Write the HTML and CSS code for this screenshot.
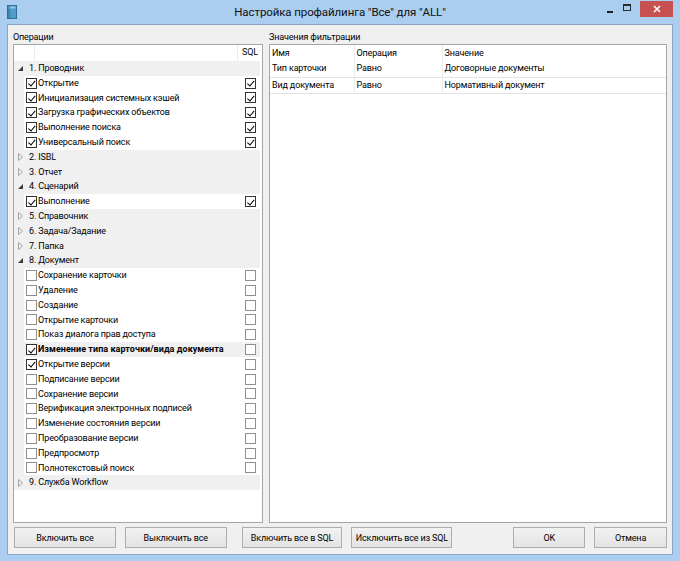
FILE: index.html
```html
<!DOCTYPE html>
<html lang="ru">
<head>
<meta charset="utf-8">
<title>Настройка профайлинга</title>
<link rel="stylesheet" href="styles.css">
</head>
<body>
<div class="window">
  <div class="titlebar">
    <div class="tb-left">
      <svg class="app-icon" width="10" height="14" viewBox="0 0 10 14">
        <rect x="0.5" y="0.5" width="9" height="13" fill="#4f9cc9" stroke="#2d6f96"/>
        <rect x="1.5" y="1.5" width="7" height="2" fill="#8cc6e6"/>
        <line x1="2" y1="1" x2="2" y2="13" stroke="#2d6f96"/>
      </svg>
    </div>
    <div class="title">Настройка профайлинга "Все" для "ALL"</div>
    <div class="tb-right">
      <span class="ctl ctl-min"><span class="min-bar"></span></span>
      <span class="ctl ctl-max"><span class="max-box"></span></span>
      <span class="ctl ctl-close">
        <svg width="8" height="8" viewBox="0 0 8 8"><path d="M1 1 L7 7 M7 1 L1 7" stroke="#fff" stroke-width="1.6"/></svg>
      </span>
    </div>
  </div>

  <div class="client">
    <div class="panes">
      <section class="pane">
        <div class="pane-label">Операции</div>
        <div class="box tree">
          <div class="tree-head">
            <span class="th-ind"></span>
            <span class="th-name"></span>
            <span class="th-sql">SQL</span>
          </div>

          <div class="row group"><span class="arrow arrow-exp"></span><span class="gtext">1. Проводник</span></div>
          <div class="row item"><div class="cell"><span class="cb on"></span><span class="itext">Открытие</span><span class="cb on sql"></span></div></div>
          <div class="row item"><div class="cell"><span class="cb on"></span><span class="itext">Инициализация системных кэшей</span><span class="cb on sql"></span></div></div>
          <div class="row item"><div class="cell"><span class="cb on"></span><span class="itext">Загрузка графических объектов</span><span class="cb on sql"></span></div></div>
          <div class="row item"><div class="cell"><span class="cb on"></span><span class="itext">Выполнение поиска</span><span class="cb on sql"></span></div></div>
          <div class="row item"><div class="cell"><span class="cb on"></span><span class="itext">Универсальный поиск</span><span class="cb on sql"></span></div></div>

          <div class="row group"><svg class="arrow-col" width="5" height="8" viewBox="0 0 5 8"><path d="M0.5 0.5 L4.5 4 L0.5 7.5 Z" fill="none" stroke="#a6a6a6"/></svg><span class="gtext">2. ISBL</span></div>
          <div class="row group"><svg class="arrow-col" width="5" height="8" viewBox="0 0 5 8"><path d="M0.5 0.5 L4.5 4 L0.5 7.5 Z" fill="none" stroke="#a6a6a6"/></svg><span class="gtext">3. Отчет</span></div>
          <div class="row group"><span class="arrow arrow-exp"></span><span class="gtext">4. Сценарий</span></div>
          <div class="row item"><div class="cell"><span class="cb on"></span><span class="itext">Выполнение</span><span class="cb on sql"></span></div></div>
          <div class="row group"><svg class="arrow-col" width="5" height="8" viewBox="0 0 5 8"><path d="M0.5 0.5 L4.5 4 L0.5 7.5 Z" fill="none" stroke="#a6a6a6"/></svg><span class="gtext">5. Справочник</span></div>
          <div class="row group"><svg class="arrow-col" width="5" height="8" viewBox="0 0 5 8"><path d="M0.5 0.5 L4.5 4 L0.5 7.5 Z" fill="none" stroke="#a6a6a6"/></svg><span class="gtext">6. Задача/Задание</span></div>
          <div class="row group"><svg class="arrow-col" width="5" height="8" viewBox="0 0 5 8"><path d="M0.5 0.5 L4.5 4 L0.5 7.5 Z" fill="none" stroke="#a6a6a6"/></svg><span class="gtext">7. Папка</span></div>
          <div class="row group"><span class="arrow arrow-exp"></span><span class="gtext">8. Документ</span></div>
          <div class="row item"><div class="cell"><span class="cb"></span><span class="itext">Сохранение карточки</span><span class="cb sql"></span></div></div>
          <div class="row item"><div class="cell"><span class="cb"></span><span class="itext">Удаление</span><span class="cb sql"></span></div></div>
          <div class="row item"><div class="cell"><span class="cb"></span><span class="itext">Создание</span><span class="cb sql"></span></div></div>
          <div class="row item"><div class="cell"><span class="cb"></span><span class="itext">Открытие карточки</span><span class="cb sql"></span></div></div>
          <div class="row item"><div class="cell"><span class="cb"></span><span class="itext">Показ диалога прав доступа</span><span class="cb sql"></span></div></div>
          <div class="row item"><div class="cell cell-sel"><span class="cb on"></span><span class="itext bold">Изменение типа карточки/вида документа</span><span class="cb sql"></span></div></div>
          <div class="row item"><div class="cell"><span class="cb on"></span><span class="itext">Открытие версии</span><span class="cb sql"></span></div></div>
          <div class="row item"><div class="cell"><span class="cb"></span><span class="itext">Подписание версии</span><span class="cb sql"></span></div></div>
          <div class="row item"><div class="cell"><span class="cb"></span><span class="itext">Сохранение версии</span><span class="cb sql"></span></div></div>
          <div class="row item"><div class="cell"><span class="cb"></span><span class="itext">Верификация электронных подписей</span><span class="cb sql"></span></div></div>
          <div class="row item"><div class="cell"><span class="cb"></span><span class="itext">Изменение состояния версии</span><span class="cb sql"></span></div></div>
          <div class="row item"><div class="cell"><span class="cb"></span><span class="itext">Преобразование версии</span><span class="cb sql"></span></div></div>
          <div class="row item"><div class="cell"><span class="cb"></span><span class="itext">Предпросмотр</span><span class="cb sql"></span></div></div>
          <div class="row item"><div class="cell"><span class="cb"></span><span class="itext">Полнотекстовый поиск</span><span class="cb sql"></span></div></div>
          <div class="row group"><svg class="arrow-col" width="5" height="8" viewBox="0 0 5 8"><path d="M0.5 0.5 L4.5 4 L0.5 7.5 Z" fill="none" stroke="#a6a6a6"/></svg><span class="gtext">9. Служба Workflow</span></div>
        </div>
      </section>

      <section class="pane">
        <div class="pane-label">Значения фильтрации</div>
        <div class="box grid">
          <table class="filters">
            <colgroup><col class="c1"><col class="c2"><col class="c3"></colgroup>
            <thead>
              <tr><th>Имя</th><th>Операция</th><th>Значение</th></tr>
            </thead>
            <tbody>
              <tr><td>Тип карточки</td><td>Равно</td><td>Договорные документы</td></tr>
              <tr><td>Вид документа</td><td>Равно</td><td>Нормативный документ</td></tr>
            </tbody>
          </table>
        </div>
      </section>
    </div>

    <div class="buttons">
      <button class="btn btn-wide">Включить все</button>
      <button class="btn btn-wide">Выключить все</button>
      <button class="btn btn-mid gap-left">Включить все в SQL</button>
      <button class="btn btn-mid">Исключить все из SQL</button>
      <span class="spacer"></span>
      <button class="btn btn-small">OK</button>
      <button class="btn btn-small">Отмена</button>
    </div>
  </div>
</div>
</body>
</html>
```

FILE: styles.css
```css
* { box-sizing: border-box; }

html, body {
  margin: 0;
  padding: 0;
  background: #aacdf0;
}

body {
  font-family: Roboto, "Liberation Sans", sans-serif;
  font-size: 9px;
  letter-spacing: -0.15px;
  color: #000;
}

.window {
  width: 680px;
  height: 561px;
  background: #aacdf0;
  display: flex;
  flex-direction: column;
}

/* ---------- title bar ---------- */
.titlebar {
  height: 24px;
  display: grid;
  grid-template-columns: 1fr auto 1fr;
  align-items: start;
}

.tb-left {
  padding: 5px 0 0 7px;
  display: flex;
}

.title {
  font-size: 11.5px;
  letter-spacing: -0.1px;
  line-height: 24px;
  color: #111;
  white-space: nowrap;
}

.tb-right {
  display: flex;
  justify-content: flex-end;
  padding-right: 7px;
  padding-top: 1px;
}

.ctl {
  display: flex;
  align-items: center;
  justify-content: center;
  height: 16px;
}

.ctl-min { width: 18px; }
.min-bar {
  width: 6px;
  height: 2px;
  background: #1e1e1e;
  margin-top: 6px;
}

.ctl-max { width: 16px; margin-right: 5px; }
.max-box {
  width: 8px;
  height: 7px;
  border: 1px solid #2a2a2a;
  border-top-width: 2px;
  margin-bottom: 4px;
}

.ctl-close {
  width: 33px;
  background: #c75050;
}

/* ---------- client ---------- */
.client {
  flex: 1;
  margin: 0 7px 6px 7px;
  background: #f0f0f0;
  border: 1px solid #8aa6c4;
  padding: 5px 5px 6px 5px;
  display: flex;
  flex-direction: column;
}

.panes {
  display: grid;
  grid-template-columns: 250px 398px;
  column-gap: 6px;
  height: 493px;
}

.pane {
  display: flex;
  flex-direction: column;
}

.pane-label {
  height: 14px;
  line-height: 14px;
}

.box {
  flex: 1;
  background: #fff;
  border: 1px solid #a5a5a5;
  overflow: hidden;
}

/* ---------- tree ---------- */
.tree-head {
  height: 16px;
  display: flex;
  line-height: 15px;
}

.th-ind {
  width: 21px;
  border-right: 1px solid #ececec;
}

.th-name {
  width: 203px;
  border-right: 1px solid #ececec;
}

.th-sql {
  flex: 1;
  padding-left: 4px;
}

.row {
  height: 14.8px;
  line-height: 14.8px;
  margin-right: 2px;
  display: flex;
  align-items: center;
  background: #f0f0f0;
}

.group { padding-left: 2px; }

.arrow-exp {
  width: 0;
  height: 0;
  border-left: 5px solid transparent;
  border-bottom: 5px solid #3c3c3c;
  margin-left: 2px;
  margin-right: 6px;
}

.arrow-col {
  margin-left: 2px;
  margin-right: 6px;
}

.gtext { white-space: nowrap; }

.item .cell {
  margin-left: 10px;
  flex: 1;
  height: 100%;
  background: #fff;
  display: flex;
  align-items: center;
  padding-left: 2px;
  padding-right: 4px;
}

.item .cell-sel { background: #f0f0f0; }

.itext {
  flex: 1;
  white-space: nowrap;
  padding-left: 1px;
}

.bold {
  font-weight: bold;
  letter-spacing: 0.05px;
}

.cb {
  width: 11px;
  height: 11px;
  border: 1px solid #8e8f8f;
  background: #fff;
  position: relative;
  flex: none;
}

.cb.on { border-color: #333; }

.cb.on::after {
  content: "";
  position: absolute;
  left: 3px;
  top: 0.5px;
  width: 2.5px;
  height: 5.5px;
  border-right: 1.9px solid #000;
  border-bottom: 1.9px solid #000;
  transform: rotate(40deg);
}

/* ---------- filter grid ---------- */
.filters {
  width: 100%;
  border-collapse: collapse;
  table-layout: fixed;
  font-size: 9px;
}

.filters .c1 { width: 84px; }
.filters .c2 { width: 88px; }

.filters th,
.filters td {
  text-align: left;
  font-weight: normal;
  padding: 0 2px;
  white-space: nowrap;
  overflow: hidden;
  border-left: 1px solid #ececec;
}

.filters th:first-child,
.filters td:first-child { border-left: none; }

.filters th {
  height: 16px;
  line-height: 16px;
}

.filters td {
  height: 16px;
  line-height: 15px;
  border-bottom: 1px solid #e2e2e2;
}

/* ---------- buttons ---------- */
.buttons {
  margin-top: 4px;
  height: 21px;
  display: flex;
  padding-left: 1px;
}

.btn {
  height: 21px;
  border: 1px solid #adadad;
  background: linear-gradient(#f2f2f2, #e3e3e3);
  font-family: inherit;
  font-size: 9px;
  letter-spacing: -0.15px;
  color: #000;
  padding: 0;
  margin-right: 9px;
  white-space: nowrap;
}

.btn-wide { width: 102px; }
.btn-mid { width: 101px; }
.btn-small { width: 72px; }
.gap-left { margin-left: 6px; }
.btn:last-child { margin-right: 0; width: 73px; }

.spacer { flex: 1; margin-right: 52px; }
```
